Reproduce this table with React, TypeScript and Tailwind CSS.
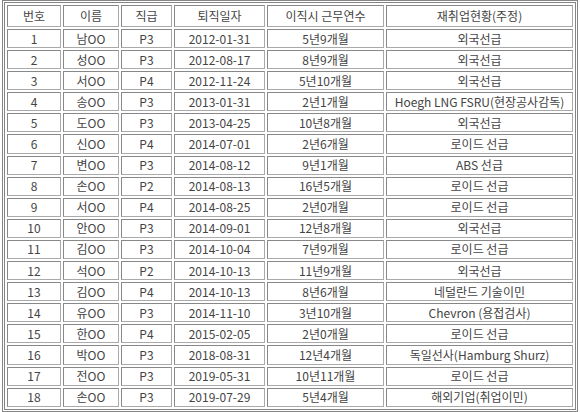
import React from "react";

type Row = [string, string, string, string, string, string];

const rows: Row[] = [
  ["1", "남OO", "P3", "2012-01-31", "5년9개월", "외국선급"],
  ["2", "성OO", "P3", "2012-08-17", "8년9개월", "외국선급"],
  ["3", "서OO", "P4", "2012-11-24", "5년10개월", "외국선급"],
  ["4", "송OO", "P3", "2013-01-31", "2년1개월", "Hoegh LNG FSRU(현장공사감독)"],
  ["5", "도OO", "P3", "2013-04-25", "10년8개월", "외국선급"],
  ["6", "신OO", "P4", "2014-07-01", "2년6개월", "로이드 선급"],
  ["7", "변OO", "P3", "2014-08-12", "9년1개월", "ABS 선급"],
  ["8", "손OO", "P2", "2014-08-13", "16년5개월", "로이드 선급"],
  ["9", "서OO", "P4", "2014-08-25", "2년0개월", "로이드 선급"],
  ["10", "안OO", "P3", "2014-09-01", "12년8개월", "외국선급"],
  ["11", "김OO", "P3", "2014-10-04", "7년9개월", "로이드 선급"],
  ["12", "석OO", "P2", "2014-10-13", "11년9개월", "외국선급"],
  ["13", "김OO", "P4", "2014-10-13", "8년6개월", "네덜란드 기술이민"],
  ["14", "유OO", "P3", "2014-11-10", "3년10개월", "Chevron (용접검사)"],
  ["15", "한OO", "P4", "2015-02-05", "2년0개월", "로이드 선급"],
  ["16", "박OO", "P3", "2018-08-31", "12년4개월", "독일선사(Hamburg Shurz)"],
  ["17", "전OO", "P3", "2019-05-31", "10년11개월", "로이드 선급"],
  ["18", "손OO", "P3", "2019-07-29", "5년4개월", "해외기업(취업이민)"],
];

const cell =
  "p-0 text-center whitespace-nowrap border border-t-[#888888] border-l-[#888888] border-r-[#aaaaaa] border-b-[#aaaaaa]";

export default function App() {
  return (
    <div className="w-[580px] h-[412px] overflow-hidden bg-white">
      <table
        className="ml-[2px] w-[576px] table-fixed border-separate border-spacing-[2px] border-[3px] border-double border-[#858585] text-[12px] leading-none text-[#444444]"
        style={{ fontFamily: '"Noto Sans CJK KR", "Noto Sans", sans-serif' }}
      >
        <thead>
          <tr>
            <th className={`${cell} w-[54px] h-[22px] font-normal`}>번호</th>
            <th className={`${cell} w-[56px] font-normal`}>이름</th>
            <th className={`${cell} w-[51px] font-normal`}>직급</th>
            <th className={`${cell} w-[91px] font-normal`}>퇴직일자</th>
            <th className={`${cell} w-[117px] font-normal`}>이직시 근무연수</th>
            <th className={`${cell} w-[187px] font-normal`}>재취업현황(주정)</th>
          </tr>
        </thead>
        <tbody>
          {rows.map((r) => (
            <tr key={r[0]}>
              {r.map((v, i) => (
                <td key={i} className={`${cell} h-[19.1px]`}>
                  {v}
                </td>
              ))}
            </tr>
          ))}
        </tbody>
      </table>
    </div>
  );
}
